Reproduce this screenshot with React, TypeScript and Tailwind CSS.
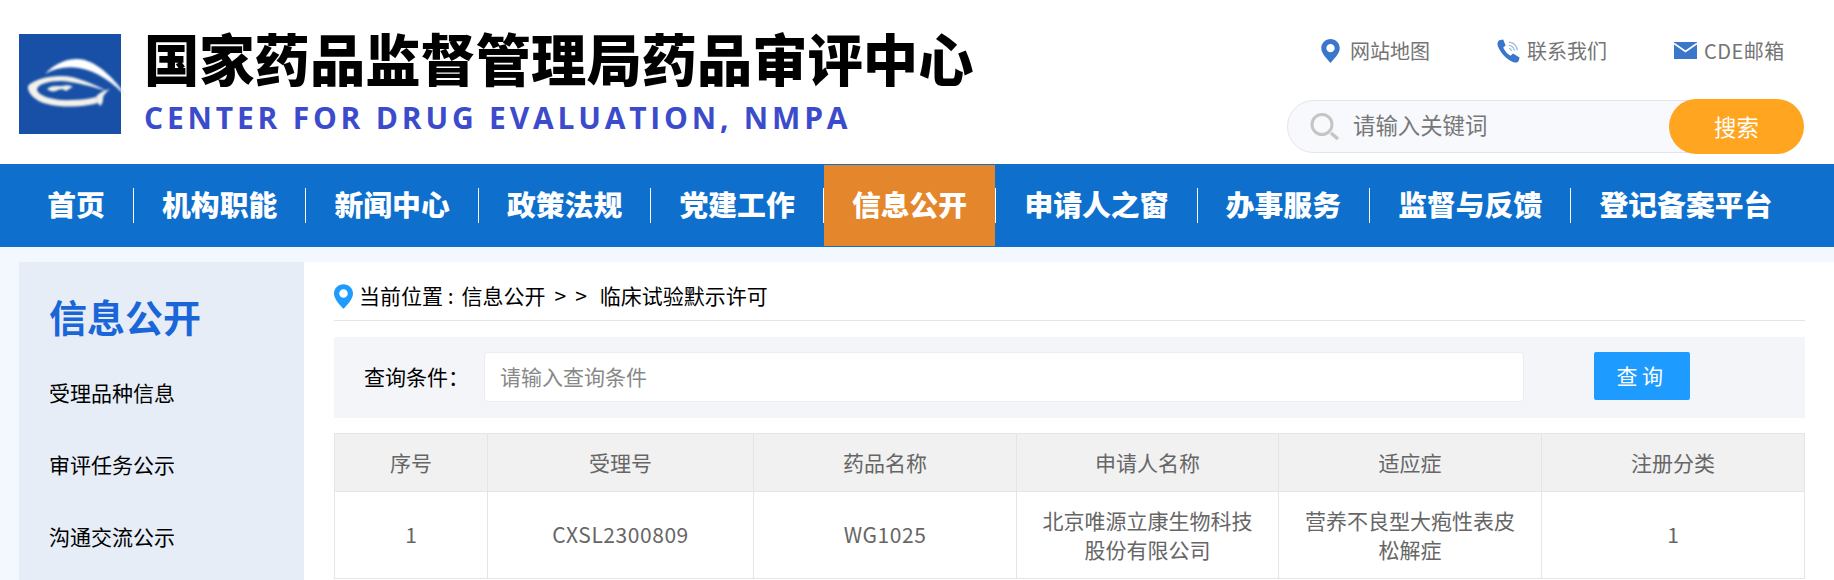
const cjk = '[font-family:"Noto_Sans_CJK_SC","Noto_Sans",sans-serif]';

const navItems = ['首页', '机构职能', '新闻中心', '政策法规', '党建工作', '信息公开', '申请人之窗', '办事服务', '监督与反馈', '登记备案平台'];
const sideItems = ['受理品种信息', '审评任务公示', '沟通交流公示'];
const columns = ['序号', '受理号', '药品名称', '申请人名称', '适应症', '注册分类'];

function Logo() {
  return (
    <svg width="112" height="100" viewBox="0 0 112 100" className="shrink-0">
      <defs>
        <linearGradient id="tail" x1="0" x2="1" y1="0" y2="0">
          <stop offset="0.7" stopColor="#ffffff" />
          <stop offset="1" stopColor="#dfe8f5" />
        </linearGradient>
        <filter id="soft">
          <feGaussianBlur stdDeviation="0.8" />
        </filter>
      </defs>
      <rect width="102" height="100" fill="#1750a6" />
      <g filter="url(#soft)">
        <path d="M26 40 C36 29 48 25 58 25 C76 25 96 44 110 66 C94 48 78 37 60 34 C48 32 36 34 26 40 Z" fill="url(#tail)" />
        <path d="M9 52 C14 46 28 42 42 42 C58 42 74 50 88 57 C74 53 58 48 42 47 C30 47 19 50 18 55 C18 62 36 67 52 66 C62 66 70 65 77 63 L79 69 C66 73 44 74 28 70 C16 67 8 59 9 52 Z" fill="#f3f1ea" />
        <path d="M77 63 C80 59 84 57 91 55 C86 59 84 62 84 65 C84 68 83 70 81 72 C79 70 78 66 77 63 Z" fill="#f3f1ea" />
        <path d="M28 55 C32 51 38 52 43 52 C47 51 51 51 54 53 C50 54 50 56 47 57 C44 55 42 55 39 56 C36 58 31 58 28 55 Z" fill="#f3f1ea" />
      </g>
    </svg>
  );
}

function PinIcon({ color, w, h }: { color: string; w: number; h: number }) {
  return (
    <svg width={w} height={h} viewBox="0 0 20 26" className="shrink-0">
      <path fillRule="evenodd" d="M10 0 C4.5 0 0 4.4 0 9.8 C0 16 6.5 22 10 26 C13.5 22 20 16 20 9.8 C20 4.4 15.5 0 10 0 Z M10 5.4 A4.5 4.5 0 1 1 10 14.4 A4.5 4.5 0 1 1 10 5.4 Z" fill={color} />
    </svg>
  );
}

function PhoneIcon() {
  return (
    <svg width="24" height="24" viewBox="0 0 24 24" className="shrink-0">
      <path d="M2.2 1.2 L6.2 0.6 L8.6 6.4 L6.3 8.6 C7.4 11.6 10.6 15.4 13.6 16.8 L16 14.6 L22.6 18.4 L21.6 22 C20.6 23.6 18.6 24 16.4 23.2 C9.6 20.8 3.4 13.8 0.8 7 C0 4.6 0.6 2.6 2.2 1.2 Z" fill="#3a76c9" />
      <path d="M12 3.2 C16 3.6 19.6 6.6 20.4 11.4 M12 6.4 C14.6 6.8 16.8 8.6 17.4 11.6 M12 9.4 C13.4 9.6 14.4 10.6 14.6 12" stroke="#9cbbe4" strokeWidth="1.3" fill="none" />
    </svg>
  );
}

function MailIcon() {
  return (
    <svg width="23" height="17" viewBox="0 0 23 17" className="shrink-0">
      <rect width="23" height="17" fill="#3a76c9" />
      <path d="M0 1.5 L11.5 9.5 L23 1.5" stroke="#ffffff" strokeWidth="1.8" fill="none" />
    </svg>
  );
}

function SearchIcon() {
  return (
    <svg width="30" height="27" viewBox="0 0 30 27" className="shrink-0">
      <circle cx="12" cy="11.5" r="10" stroke="#c4c6c4" strokeWidth="3" fill="none" />
      <path d="M21 20 L28 26" stroke="#c4c6c4" strokeWidth="3.5" />
    </svg>
  );
}

export default function App() {
  return (
    <div className={`w-[1834px] h-[580px] overflow-hidden bg-white ${cjk}`}>
      {/* header */}
      <header className="h-[164px] flex pl-[19px] pr-[30px]">
        <div className="flex pt-[34px]">
          <div className="w-[125px] shrink-0">
            <Logo />
          </div>
          <div>
            <div className="text-[55.3px] leading-[46px] font-black text-black whitespace-nowrap h-[66px]">国家药品监督管理局药品审评中心</div>
            <div className='text-[30px] leading-[36px] font-bold text-[#3c4bcb] tracking-[3.8px] whitespace-nowrap [font-family:"Open_Sans",sans-serif]'>CENTER FOR DRUG EVALUATION, NMPA</div>
          </div>
        </div>
        <div className="ml-auto w-[517px] pt-[38px]">
          <div className="flex items-center h-[25px] pl-[34px] text-[20px] leading-[25px] text-[#747474]">
            <div className="flex items-center gap-[10px] w-[176px]">
              <PinIcon color="#3a76c9" w={19} h={24} />
              <span>网站地图</span>
            </div>
            <div className="flex items-center gap-[6px] w-[177px]">
              <PhoneIcon />
              <span>联系我们</span>
            </div>
            <div className="flex items-center gap-[7px]">
              <MailIcon />
              <span className="tracking-[0.5px]">CDE邮箱</span>
            </div>
          </div>
          <div className="mt-[36px] relative h-[55px]">
            <div className="absolute left-0 right-[60px] top-[1px] h-[53px] rounded-full border border-[#e3e5ea] bg-[#f8f9fd] flex items-center pl-[22px] gap-[13px]">
              <SearchIcon />
              <span className="text-[22.4px] text-[#777777] pb-[3px]">请输入关键词</span>
            </div>
            <button className="absolute right-0 top-0 w-[135px] h-[55px] rounded-full bg-[#ffa520] text-white text-[22.4px]">搜索</button>
          </div>
        </div>
      </header>

      {/* nav */}
      <nav className="h-[83px] bg-[#0e6fcd] flex items-center pl-[19px]">
        {navItems.map((item, i) => (
          <div key={item} className="flex items-center">
            <div className={`px-[28.15px] h-[81px] pb-[3px] flex items-center text-white text-[28.8px] font-black whitespace-nowrap ${item === '信息公开' ? 'bg-[#e3862c]' : ''}`}>
              {item}
            </div>
            {i < navItems.length - 1 && <div className="w-px h-[35px] bg-white" />}
          </div>
        ))}
      </nav>

      {/* content */}
      <div className="bg-[#f3f7fe] pt-[15px] pl-[19px] flex h-[333px]">
        <aside className="w-[285px] bg-[#e6edf6] shrink-0 pl-[30px]">
          <div className="text-[38px] leading-[50px] font-bold text-[#1a66d8] mt-[29px]">信息公开</div>
          <ul className="mt-[31px] flex flex-col gap-[32px]">
            {sideItems.map((s) => (
              <li key={s} className="text-[21px] leading-[40px] text-black">{s}</li>
            ))}
          </ul>
        </aside>
        <main className="flex-1 bg-white px-[30px]">
          <div className="h-[59px] border-b border-[#e5e5e5] flex items-center gap-[6px] pt-[10px] text-[21px] text-black">
            <PinIcon color="#1e9bff" w={19} h={25} />
            <span className="whitespace-pre">
              当前位置 :<span className="ml-[8px]">信息公开</span>
              <span className="ml-[9px]">&gt;</span>
              <span className="ml-[9px]">&gt;</span>
              <span className="ml-[13px]">临床试验默示许可</span>
            </span>
          </div>
          <div className="mt-[16px] h-[81px] bg-[#f4f5f9] flex items-center pl-[30px] pb-[2px]">
            <span className="w-[120px] text-[21px] text-black">查询条件：</span>
            <div className="w-[1040px] h-[50px] bg-white border border-[#ececec] rounded-[4px] flex items-center pl-[15px] text-[21px] text-[#888888]">
              请输入查询条件
            </div>
            <button className="ml-[70px] w-[96px] h-[48px] mb-[2px] rounded-[2px] bg-[#1e9bff] text-white text-[21px] tracking-[4.5px]">查询</button>
          </div>
          <table className="mt-[15px] w-full table-fixed border-collapse text-[21px] text-[#666666]">
            <colgroup>
              <col className="w-[153px]" />
              <col className="w-[266px]" />
              <col className="w-[263px]" />
              <col className="w-[262px]" />
              <col className="w-[263px]" />
              <col className="w-[263px]" />
            </colgroup>
            <thead>
              <tr className="h-[58px] bg-[#f1f1f1]">
                {columns.map((c) => (
                  <th key={c} className="border border-[#e5e5e5] font-normal text-center">{c}</th>
                ))}
              </tr>
            </thead>
            <tbody>
              <tr className="h-[87px]">
                <td className="border border-[#e5e5e5] text-center">1</td>
                <td className="border border-[#e5e5e5] text-center tracking-[0.55px]">CXSL2300809</td>
                <td className="border border-[#e5e5e5] text-center tracking-[0.55px]">WG1025</td>
                <td className="border border-[#e5e5e5] text-center leading-[29px] px-[24px]">北京唯源立康生物科技股份有限公司</td>
                <td className="border border-[#e5e5e5] text-center leading-[29px] px-[24px]">营养不良型大疱性表皮松解症</td>
                <td className="border border-[#e5e5e5] text-center">1</td>
              </tr>
            </tbody>
          </table>
        </main>
      </div>
    </div>
  );
}
